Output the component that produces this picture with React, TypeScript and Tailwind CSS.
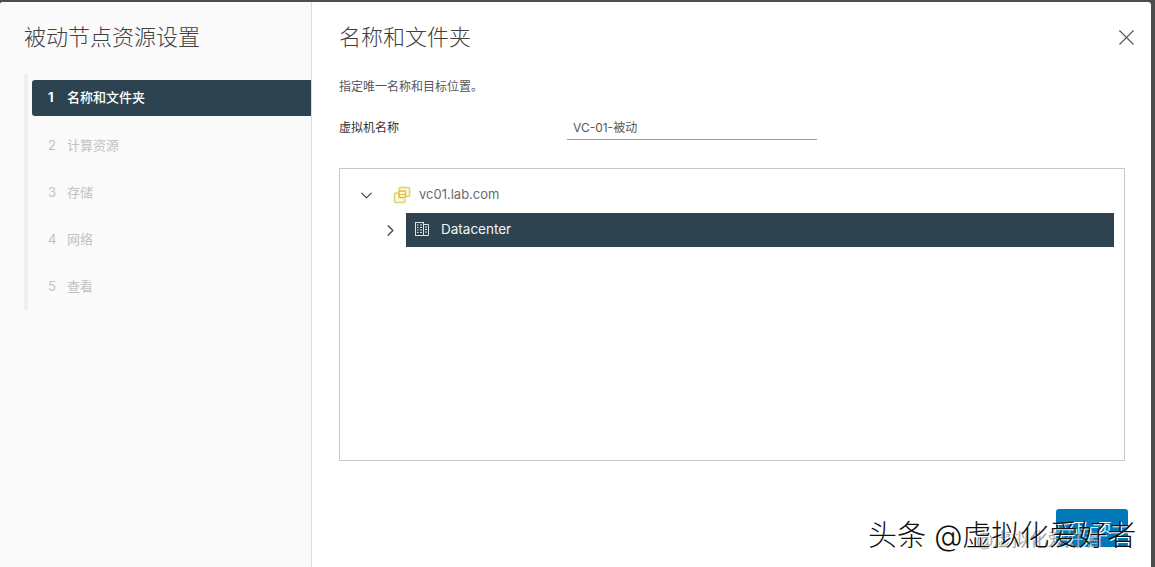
import { ChevronDown, ChevronRight, X } from "lucide-react";

const stack = "font-['Inter','Noto_Sans_CJK_SC','Noto_Sans',sans-serif]";

const steps = ["计算资源", "存储", "网络", "查看"];

function VcenterIcon() {
  return (
    <svg width="18" height="18" viewBox="0 0 18 18" fill="none">
      <path d="M6 5V3a1.500 1.500 0 0 1 1.500-1.500h7.500A1.500 1.500 0 0 1 16.500 3v6a1.500 1.500 0 0 1-1.500 1.500h-2" fill="#f6f9e2" stroke="#c9dc78" strokeWidth="1.600" />
      <path d="M12 13v2a1.500 1.500 0 0 1-1.500 1.500H3A1.500 1.500 0 0 1 1.500 15V8.500A1.500 1.500 0 0 1 3 7h2" fill="#f6f9e2" stroke="#c9dc78" strokeWidth="1.600" />
      <rect x="6" y="5" width="6.500" height="6.500" rx="1" fill="#fffbe8" stroke="#e8b92f" strokeWidth="1.500" />
      <path d="M6 8.500h6.500" stroke="#e8b92f" strokeWidth="1" />
    </svg>
  );
}

function DatacenterIcon() {
  return (
    <svg width="16" height="16" viewBox="0 0 16 16" fill="none" stroke="#dbe3e8" strokeWidth="1">
      <rect x="1.500" y="1.500" width="8" height="13" />
      <path d="M9.500 3.500h5v11h-5" />
      <path d="M3 4h1.500M6 4h2M3 6.500h1.500M6 6.500h2M3 9h1.500M6 9h2M3 11.500h1.500M6 11.500h2M11 6h2M11 8.500h2M11 11h2" />
    </svg>
  );
}

export default function App() {
  return (
    <div className={`relative h-[567px] w-[1155px] overflow-hidden bg-[#4d4d4d] pt-[2px] pr-[4px] ${stack}`}>
      <div className="flex h-[565px] overflow-hidden rounded-t-[3px] bg-white">
        <div className="w-[312px] shrink-0 border-r border-[#dcdcdc] bg-[#fafafa] pt-[19px]">
          <h2 className="pl-[24px] text-[22px] leading-[32px] font-light text-[#404040]">被动节点资源设置</h2>
          <div className="mt-[21px] ml-[24px] h-[236px] border-l-[4px] border-[#eeeeee] pt-[6px] pl-[4px]">
            <div className="flex h-[36px] items-center rounded-l-[3px] bg-[#2d4350] pl-[16px] text-[13px] font-medium text-white">
              <span className="w-[19px] font-bold">1</span>
              <span>名称和文件夹</span>
            </div>
            {steps.map((s, i) => (
              <div key={s} className="mt-[11px] flex h-[36px] items-center pt-[2px] pl-[16px] text-[13px] text-[#c2c2c2]">
                <span className="w-[19px]">{i + 2}</span>
                <span>{s}</span>
              </div>
            ))}
          </div>
        </div>

        <div className="flex-1 pt-[20px] pr-[29px] pl-[27px]">
          <div className="flex items-center justify-between">
            <h3 className="text-[22px] leading-[30px] font-light text-[#404040]">名称和文件夹</h3>
            <X size={27} strokeWidth={1} className="mr-[-15px] text-[#555555]" />
          </div>
          <p className="mt-[26px] text-[12px] leading-[18px] text-[#565656]">指定唯一名称和目标位置。</p>
          <div className="mt-[20px] flex items-center text-[12px] text-[#333333]">
            <label className="w-[228px]">虚拟机名称</label>
            <div className="h-[24px] w-[250px] border-b border-[#9a9a9a] pl-[6px] leading-[24px] text-[#565656]">VC-01-被动</div>
          </div>
          <div className="mt-[28px] h-[293px] w-[786px] border border-[#c8c8c8] pt-[8px] pr-[10px] pl-[18px]">
            <div className="flex h-[36px] items-center text-[13px] text-[#6b6b6b]">
              <ChevronDown size={19} strokeWidth={1.6} className="ml-[-1px] text-[#444444]" />
              <span className="ml-[17px]"><VcenterIcon /></span>
              <span className="ml-[8px]">vc01.lab.com</span>
            </div>
            <div className="flex h-[34px] items-center">
              <ChevronRight size={19} strokeWidth={1.6} className="ml-[23px] text-[#444444]" />
              <div className="ml-[6px] flex h-[34px] flex-1 items-center bg-[#2d4350] pb-[2px] pl-[8px] text-[13.500px] text-[#f2f5f6]">
                <DatacenterIcon />
                <span className="ml-[11px]">Datacenter</span>
              </div>
            </div>
          </div>
        </div>
      </div>

      {/* next button, mostly hidden by the watermark */}
      <div className="absolute top-[509px] left-[1056px] flex h-[38px] w-[72px] items-start justify-center rounded-[3px] bg-[#0079b8] pt-[9px] text-[13px] text-white">下一页</div>
      <div className="absolute top-[529px] left-[976px] text-[18px] leading-[22px] text-[#a8a8a8]">@虚拟化爱好者</div>
      <div className="absolute top-[514px] left-[868px] text-[29px] leading-[44px] font-light whitespace-nowrap text-[#111111] [text-shadow:1px_1px_0_#ffffff]">头条 @虚拟化爱好者</div>
    </div>
  );
}
